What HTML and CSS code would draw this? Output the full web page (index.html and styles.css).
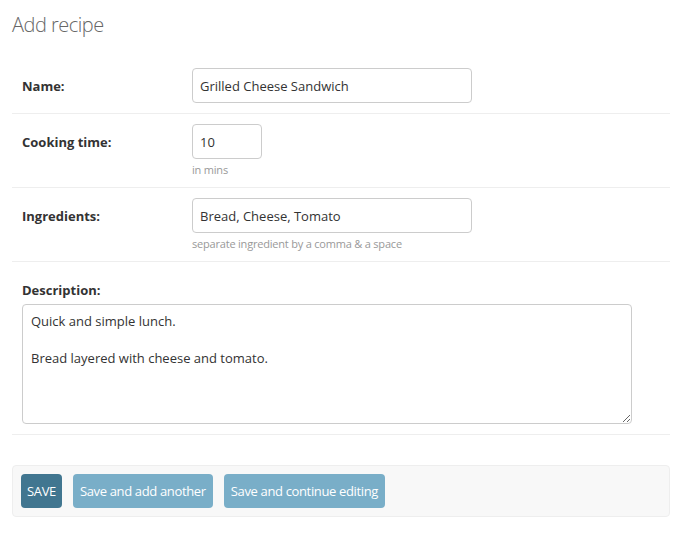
FILE: index.html
```html
<!DOCTYPE html>
<html lang="en">
<head>
<meta charset="utf-8">
<title>Add recipe</title>
<link rel="stylesheet" href="styles.css">
</head>
<body>
<div class="content">
  <h1 class="title">Add recipe</h1>
  <form class="form">
    <fieldset class="fields">
      <div class="form-row">
        <label class="label" for="id_name">Name:</label>
        <div class="field">
          <input class="input input-wide" id="id_name" type="text" value="Grilled Cheese Sandwich">
        </div>
      </div>
      <div class="form-row">
        <label class="label" for="id_time">Cooking time:</label>
        <div class="field">
          <input class="input input-small" id="id_time" type="text" value="10">
          <div class="help">in mins</div>
        </div>
      </div>
      <div class="form-row">
        <label class="label" for="id_ing">Ingredients:</label>
        <div class="field">
          <input class="input input-wide" id="id_ing" type="text" value="Bread, Cheese, Tomato">
          <div class="help">separate ingredient by a comma &amp; a space</div>
        </div>
      </div>
      <div class="form-row form-row-stacked">
        <label class="label label-stacked" for="id_desc">Description:</label>
        <textarea class="textarea" id="id_desc">Quick and simple lunch.

Bread layered with cheese and tomato.</textarea>
      </div>
    </fieldset>
    <div class="submit-row">
      <button type="button" class="btn btn-primary">SAVE</button>
      <button type="button" class="btn">Save and add another</button>
      <button type="button" class="btn">Save and continue editing</button>
    </div>
  </form>
</div>
</body>
</html>
```
FILE: styles.css
```css
* { box-sizing: border-box; }
html, body { margin: 0; padding: 0; background: #fff; }
body {
  font-family: "Open Sans", "Noto Sans", sans-serif;
  font-size: 13px;
  color: #333;
}
.content { padding: 12px 4px 0 12px; }
.title {
  margin: 0;
  font-size: 20px;
  line-height: 26px;
  font-weight: 300;
  color: #666;
  letter-spacing: -0.5px;
}
.form { margin-top: 20px; }
.fields { border: 0; margin: 0; padding: 0; min-width: 0; }
.form-row {
  display: flex;
  align-items: flex-start;
  padding: 10px;
  border-bottom: 1px solid #eee;
}
.label {
  width: 170px;
  flex: none;
  font-weight: 700;
  color: #333;
  padding-top: 9px;
  line-height: 18px;
}
.field { display: flex; flex-direction: column; }
.input {
  height: 35px;
  border: 1px solid #ccc;
  border-radius: 4px;
  padding: 0 7px;
  font: inherit;
  color: #333;
  background: #fff;
}
.input-wide { width: 280px; }
.input-small { width: 70px; }
.help {
  font-size: 11px;
  color: #999;
  line-height: 15px;
  margin-top: 3px;
  letter-spacing: -0.2px;
}
.form-row-stacked { flex-direction: column; }
.label-stacked { padding-top: 10px; line-height: 16px; margin-bottom: 6px; width: auto; }
.textarea {
  width: 610px;
  height: 120px;
  border: 1px solid #ccc;
  border-radius: 4px;
  padding: 7px 8px;
  font: inherit;
  line-height: 18.5px;
  color: #333;
  resize: vertical;
}
.submit-row {
  margin-top: 30px;
  display: flex;
  gap: 11px;
  padding: 8px;
  background: #f8f8f8;
  border: 1px solid #eee;
  border-radius: 4px;
}
.btn {
  height: 34px;
  padding: 0 7px;
  border: 0;
  border-radius: 4px;
  background: #79aec8;
  color: #fff;
  font: inherit;
  letter-spacing: -0.35px;
  cursor: pointer;
}
.btn-primary { background: #417690; padding: 0 6px; }
```
